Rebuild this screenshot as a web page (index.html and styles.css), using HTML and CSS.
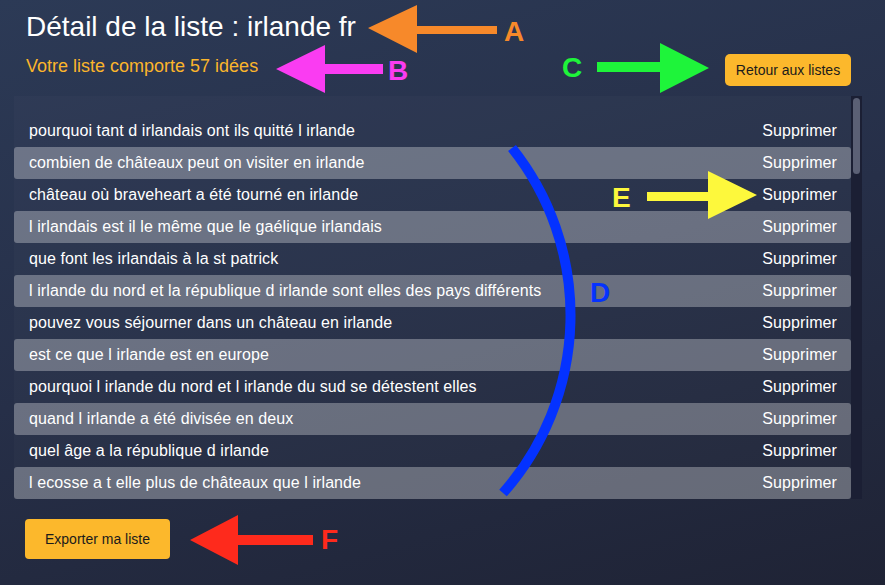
FILE: index.html
```html
<!DOCTYPE html>
<html lang="fr">
<head>
<meta charset="utf-8">
<title>Détail de la liste</title>
<link rel="stylesheet" href="styles.css">
</head>
<body>
<div class="page">
  <header class="header">
    <h1 class="title">Détail de la liste : irlande fr</h1>
    <div class="subrow">
      <p class="count">Votre liste comporte 57 idées</p>
      <button class="btn btn-back">Retour aux listes</button>
    </div>
  </header>

  <section class="panel">
    <ul class="list">
      <li class="row"><span>pourquoi tant d irlandais ont ils quitté l irlande</span><span class="del">Supprimer</span></li>
      <li class="row"><span>combien de châteaux peut on visiter en irlande</span><span class="del">Supprimer</span></li>
      <li class="row"><span>château où braveheart a été tourné en irlande</span><span class="del">Supprimer</span></li>
      <li class="row"><span>l irlandais est il le même que le gaélique irlandais</span><span class="del">Supprimer</span></li>
      <li class="row"><span>que font les irlandais à la st patrick</span><span class="del">Supprimer</span></li>
      <li class="row"><span>l irlande du nord et la république d irlande sont elles des pays différents</span><span class="del">Supprimer</span></li>
      <li class="row"><span>pouvez vous séjourner dans un château en irlande</span><span class="del">Supprimer</span></li>
      <li class="row"><span>est ce que l irlande est en europe</span><span class="del">Supprimer</span></li>
      <li class="row"><span>pourquoi l irlande du nord et l irlande du sud se détestent elles</span><span class="del">Supprimer</span></li>
      <li class="row"><span>quand l irlande a été divisée en deux</span><span class="del">Supprimer</span></li>
      <li class="row"><span>quel âge a la république d irlande</span><span class="del">Supprimer</span></li>
      <li class="row"><span>l ecosse a t elle plus de châteaux que l irlande</span><span class="del">Supprimer</span></li>
    </ul>
    <div class="scrollbar"><div class="thumb"></div></div>
  </section>

  <footer class="footer">
    <button class="btn btn-export">Exporter ma liste</button>
  </footer>
</div>

<svg class="annotations" width="885" height="585" viewBox="0 0 885 585" xmlns="http://www.w3.org/2000/svg">
  <g fill="#f7892a">
    <polygon points="368,28 417,5 417,26 497,26 497,34 417,34 417,53"/>
    <text x="504" y="41" class="mark">A</text>
  </g>
  <g fill="#fa3cf2">
    <polygon points="276,69 325,45 325,64 383,64 383,74 325,74 325,93"/>
    <text x="388" y="80" class="mark">B</text>
  </g>
  <g fill="#1ef43a">
    <polygon points="597,62 660,62 660,43 709,68 660,93 660,72 597,72"/>
    <text x="562" y="77" class="mark">C</text>
  </g>
  <path d="M512,148 A268,268 0 0 1 503,493" fill="none" stroke="#0432ff" stroke-width="10"/>
  <text x="590" y="302" class="mark" fill="#0432ff">D</text>
  <g fill="#fdf83c">
    <polygon points="647,192 708,192 708,171 757,195 708,219 708,201 647,201"/>
    <text x="612" y="207" class="mark">E</text>
  </g>
  <g fill="#fe2a1c">
    <polygon points="190,540 238,515 238,535 313,535 313,545 238,545 238,565"/>
    <text x="321" y="549" class="mark">F</text>
  </g>
</svg>
</body>
</html>
```

FILE: styles.css
```css
* { box-sizing: border-box; }

html, body {
  margin: 0;
  padding: 0;
  height: 100%;
}

body {
  font-family: "Liberation Sans", Arial, Helvetica, sans-serif;
  background: linear-gradient(165deg, #2c3a56 0%, #262f48 50%, #1f2335 100%);
  color: #ffffff;
  position: relative;
  overflow: hidden;
}

.page {
  padding: 0 23px 0 14px;
}

.header {
  display: flex;
  flex-direction: column;
  padding: 0 11px 0 12px;
}

.title {
  margin: 11px 0 0;
  font-size: 28px;
  line-height: 32px;
  font-weight: normal;
  color: #ffffff;
}

.subrow {
  display: flex;
  justify-content: space-between;
  align-items: flex-start;
  margin-top: 11px;
}

.count {
  margin: 2px 0 0;
  font-size: 18px;
  line-height: 21px;
  color: #fbb52b;
}

.btn {
  font-family: "Liberation Sans", Arial, Helvetica, sans-serif;
  font-size: 14px;
  color: #1b1b1b;
  background: #fcb82c;
  border: none;
  border-radius: 5px;
  padding: 0;
  cursor: pointer;
}

.btn-back {
  width: 126px;
  height: 32px;
}

.panel {
  margin-top: 10px;
  display: flex;
  height: 403px;
  background: rgba(255, 255, 255, 0.02);
}

.list {
  list-style: none;
  margin: 0;
  padding: 19px 0 0;
  flex: 1;
}

.row {
  display: flex;
  justify-content: space-between;
  align-items: center;
  height: 32px;
  padding: 0 14px 0 15px;
  font-size: 16px;
  letter-spacing: 0.1px;
  color: #ffffff;
  border-radius: 3px;
}

.row:nth-child(even) {
  background: rgba(255, 255, 255, 0.3);
}

.scrollbar {
  width: 11px;
  background: #1b1f34;
  padding: 2px 2px 0 2px;
}

.thumb {
  height: 76px;
  border-radius: 4px;
  background: #5b6075;
}

.footer {
  padding: 20px 0 0 11px;
}

.btn-export {
  width: 145px;
  height: 40px;
  border-radius: 4px;
}

.annotations {
  position: absolute;
  left: 0;
  top: 0;
  pointer-events: none;
}

.mark {
  font-family: "Liberation Sans", Arial, Helvetica, sans-serif;
  font-weight: bold;
  font-size: 28px;
}
```
